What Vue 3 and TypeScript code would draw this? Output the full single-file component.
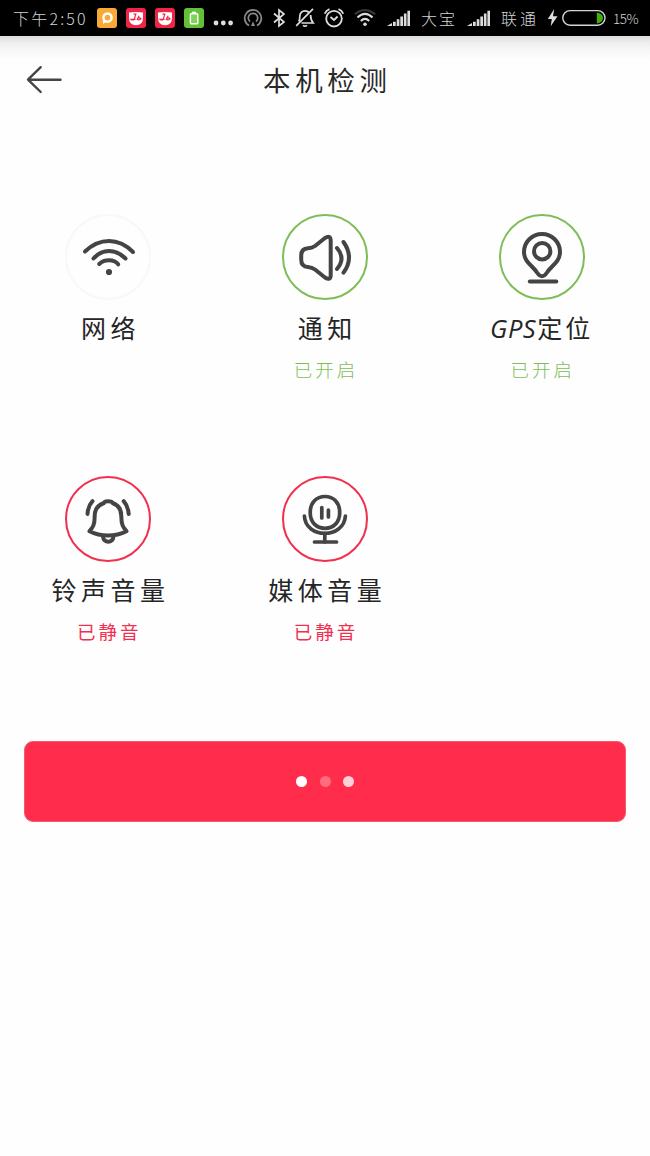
<script setup lang="ts">
type IconName = 'wifi' | 'speaker' | 'pin' | 'bell' | 'mic'

interface CheckItem {
  icon: IconName
  label: string
  status: string
  state: 'pending' | 'ok' | 'error'
  mixed?: boolean
}

const items: CheckItem[] = [
  { icon: 'wifi', label: '网络', status: '', state: 'pending' },
  { icon: 'speaker', label: '通知', status: '已开启', state: 'ok' },
  { icon: 'pin', label: '定位', status: '已开启', state: 'ok', mixed: true },
  { icon: 'bell', label: '铃声音量', status: '已静音', state: 'error' },
  { icon: 'mic', label: '媒体音量', status: '已静音', state: 'error' },
]

const icons: Record<IconName, string[]> = {
  wifi: [
    'M20 37.5Q31 27 44 27T68 38',
    'M28.5 44.5Q35 37 44 37T60.5 44.5',
    'M34.2 50Q38 46.2 44 46.2T53.2 50.3',
  ],
  speaker: [
    'M19.2 44V42Q19 34.5 26 34.2Q30 34.2 33 32L43 24Q48.7 20.5 48.7 27V61Q48.7 67 43 63.5L33 55.5Q30 53.3 26 53Q19 52.7 19.2 45Z',
    'M55 34Q64 44.5 55 55',
    'M61.5 28Q72.5 43.5 61.5 58.7',
  ],
  pin: [
    'M43 62.2Q40.5 62.2 38 58.5C34 52 25 48 25 38A18 18 0 0 1 61 38C61 48 52 52 48 58.5Q45.5 62.2 43 62.2Z',
    'M35 37.2a8.2 8.2 0 1 0 16.4 0a8.2 8.2 0 1 0-16.4 0Z',
    'M30.8 67.5H57.3',
  ],
  bell: [
    'M39 27Q39 25.2 43 25.2T47.5 27C53.5 29 56.3 33 56.3 40C56.3 49 58 51 61.5 55.2Q53 59.5 43 59.5T24.5 55.2C28 51 29.7 49 29.7 40C29.7 33 33 29 39 27Z',
    'M38 60.5C38.5 67.5 48 67.5 48.5 60.5',
    'M27.5 25.2Q23 30 22.5 38',
    'M58.7 25.2Q63 30 63.7 38',
  ],
  mic: [
    'M43 20.5C51.5 20.5 57.7 26.5 57.7 36.5S51.5 52.3 43 52.3S28.2 46.5 28.2 36.5S34.5 20.5 43 20.5Z',
    'M22.4 40C23.5 63 62 63 63.4 40',
    'M39.8 31.5V42',
    'M46.4 34V41',
    'M42.8 57.5V66',
    'M32.5 66H54.5',
  ],
}
</script>

<template>
  <main class="screen">
    <header class="status">
      <span class="time">下午2:50</span>
      <span class="app orange">
        <svg width="20" height="20"><path d="M6 16V10A4.5 4 0 1 1 10.5 14Q8.5 13.8 7.5 15Z" fill="#fff" /><circle cx="10.5" cy="9.6" r="4.1" fill="#f8a936" stroke="#fff" stroke-width="2.4" /></svg>
      </span>
      <span v-for="n in 2" :key="n" class="app red">
        <svg width="20" height="20"><path d="M3 4.5Q10 3.4 17 4.5V10Q17 17.3 10 17.3T3 10Z" fill="#fff" /><path d="M7.5 6.2H9.8L8.3 11.2Q6.8 12.6 5.2 11.4H9.5M13.2 7.8L11.2 11.2Q13.5 12.6 15 10.6Q14 9.2 12.2 10.2" fill="none" stroke="#ef2547" stroke-width="1.2" /></svg>
      </span>
      <span class="app green">
        <svg width="20" height="20"><rect x="6.4" y="5.7" width="7.4" height="10" rx=".8" fill="#7fd457" stroke="#fff" stroke-width="1.4" /><path d="M8 4.4H12" stroke="#fff" stroke-width="1.5" /></svg>
      </span>
      <svg class="more" width="20" height="20"><g fill="#dedede"><circle cx="3" cy="15" r="2.4" /><circle cx="10.3" cy="15" r="2.4" /><circle cx="17.6" cy="15" r="2.4" /></g></svg>
      <svg class="cast" width="20" height="20" fill="none" stroke="#8b8b8b" stroke-width="1.7"><path d="M6 17.5A8.3 8.3 0 1 1 14 17.5" /><path d="M7 13.6A4.7 4.7 0 1 1 13 13.6" /><path d="M10 13.5L12 18H8Z" fill="#8b8b8b" stroke="none" /></svg>
      <svg class="bt" width="12" height="20" fill="none" stroke="#ddd" stroke-width="1.7"><path d="M1 5.5L11 14L6 18V2L11 6L1 14.5" /></svg>
      <svg class="mute" width="20" height="20" fill="none" stroke="#ddd" stroke-width="1.7"><path d="M3.8 13.5Q4.8 12 4.8 8.5C4.8 5.2 7 2.8 10 2.8Q12.5 2.8 14.2 4.6M15.6 7Q15.6 12 18.2 15H6.5M8 17.3Q10 19 12 17.3M1.2 17.8L18 .8" /></svg>
      <svg class="alarm" width="20" height="20" fill="none" stroke="#ddd" stroke-width="1.8"><circle cx="10" cy="10.7" r="7.8" /><path d="M6.5 9L10 12L13.6 8.5M.8 5.8Q2 2.4 5.5 1.2M19.2 5.8Q18 2.4 14.5 1.2" /></svg>
      <svg class="net" width="22" height="20" fill="none" stroke="#ddd" stroke-width="2.1"><path d="M.8 6.2Q11-2 21.2 6.2" stroke="#363636" /><path d="M3.5 9.4Q11 2.4 18.5 9.4M6.8 12.9Q11 8.8 15.2 12.9" /><circle cx="11" cy="16.3" r="1.8" fill="#ddd" stroke="none" /></svg>
      <svg class="signal" width="24" height="20" fill="#ddd"><path d="M0 18L5 15V18ZM6 13.8H8.7V18H6ZM9.7 11.2H12.4V18H9.7ZM13.3 8.4H16V18H13.3ZM16.9 5.6H19.5V18H16.9ZM20.4 2.8H23V18H20.4Z" /></svg>
      <span class="carrier one">大宝</span>
      <svg class="signal" width="24" height="20" fill="#ddd"><path d="M0 18L5 15V18ZM6 13.8H8.7V18H6ZM9.7 11.2H12.4V18H9.7ZM13.3 8.4H16V18H13.3ZM16.9 5.6H19.5V18H16.9ZM20.4 2.8H23V18H20.4Z" /></svg>
      <span class="carrier two">联通</span>
      <svg class="bolt" width="11" height="20" fill="#ddd"><path d="M7.2 1L.8 11H4.8L3.7 18.3L10.5 8.2H6Z" /></svg>
      <svg class="battery" width="44" height="20"><rect x=".8" y="2.6" width="42.2" height="14.6" rx="7.2" fill="none" stroke="#d5d5d5" stroke-width="1.4" /><path d="M34.8 4.7C43 4.7 43 15.2 34.8 15.2Z" fill="#43ad0d" /></svg>
      <span class="percent">15%</span>
    </header>

    <nav class="titlebar">
      <svg class="back" width="38" height="30" fill="none" stroke="#444" stroke-width="2.4" stroke-linecap="round" stroke-linejoin="round"><path d="M15.7 3.2L3 15.7L15.7 28M3.5 15.7H35.5" /></svg>
      <h1>本机检测</h1>
    </nav>

    <section class="checks">
      <div v-for="item in items" :key="item.label" class="check" :class="item.state">
        <div class="ring">
          <svg width="86" height="86" viewBox="0 0 86 86" fill="none" stroke="#444" stroke-width="4" stroke-linecap="round" stroke-linejoin="round">
            <path v-for="d in icons[item.icon]" :key="d" :d="d" :stroke-width="item.icon === 'mic' ? 3.7 : 4" />
            <circle v-if="item.icon === 'wifi'" cx="44" cy="58" r="3.1" fill="#444" stroke="none" />
          </svg>
        </div>
        <div class="label" :class="{ mixed: item.mixed }"><i v-if="item.mixed">GPS</i>{{ item.label }}</div>
        <div class="result">{{ item.status }}</div>
      </div>
    </section>

    <button class="action" type="button" aria-label="检测中">
      <b></b><b></b><b></b>
    </button>
  </main>
</template>

<style>
body {
  margin: 0;
  background: #fefefe;
}
</style>

<style scoped>
.screen {
  width: 650px;
  height: 1156px;
  overflow: hidden;
  background: #fefefe;
  color: #252525;
  font-family: "Noto Sans CJK SC", sans-serif;
  font-weight: 400;
}
.status {
  display: flex;
  align-items: center;
  box-sizing: border-box;
  height: 36px;
  padding-left: 13px;
  background: #000;
  color: #d4d4d4;
  font-size: 16px;
  font-weight: 300;
  line-height: 32px;
  white-space: nowrap;
}
.status > * {
  flex-shrink: 0;
}
.status svg {
  display: block;
}
.time {
  width: 75px;
  letter-spacing: 2.2px;
}
.app {
  width: 20px;
  height: 20px;
  margin-left: 9px;
  border-radius: 3px;
}
.orange {
  background: #f8a936;
}
.red {
  background: #ef2547;
}
.green {
  background: #63c135;
}
.more {
  margin-left: 9px;
}
.cast {
  margin-left: 10px;
}
.bt {
  margin-left: 10px;
}
.mute {
  margin-left: 10px;
}
.alarm {
  margin-left: 9px;
}
.net {
  margin-left: 10px;
}
.signal {
  margin-left: 11px;
}
.carrier {
  margin-left: 10px;
  letter-spacing: 2px;
}
.one {
  width: 35px;
}
.two {
  width: 37px;
  letter-spacing: 3px;
}
.bolt {
  margin-left: 9px;
}
.battery {
  margin-left: 4px;
}
.percent {
  margin-left: 7px;
  font-size: 13.5px;
  letter-spacing: -0.5px;
}
.titlebar {
  display: grid;
  grid-template-columns: 100px 1fr 100px;
  align-items: center;
  height: 86px;
  background: linear-gradient(#dcdcdc, #ededed 6px, #f7f7f7 14px, #fefefe 24px);
}
.back {
  margin-left: 25px;
}
h1 {
  margin: 0;
  color: #292929;
  font-size: 27.5px;
  font-weight: 400;
  line-height: 40px;
  letter-spacing: 4.7px;
  text-align: center;
  text-indent: 4.7px;
}
.checks {
  display: grid;
  grid-template-columns: repeat(3, 1fr);
  grid-auto-rows: 262px;
  margin-top: 92px;
}
.check {
  display: flex;
  flex-direction: column;
  align-items: center;
}
.ring {
  box-sizing: border-box;
  width: 86px;
  height: 86px;
  border: 2px solid #f8f8f8;
  border-radius: 50%;
}
.ring svg {
  display: block;
  margin: -2px;
}
.ok .ring {
  border-color: #7fbd58;
}
.error .ring {
  border-color: #f32f50;
}
.label {
  height: 40px;
  margin-top: 7px;
  font-size: 25px;
  line-height: 40px;
  letter-spacing: 4.5px;
  text-indent: 4.5px;
  white-space: nowrap;
}
.label i {
  margin-right: 1px;
  font-family: "Open Sans", sans-serif;
  font-size: 25.5px;
  font-weight: 400;
  letter-spacing: 0.5px;
}
.mixed {
  letter-spacing: 3px;
  text-indent: 0;
}
.result {
  height: 30px;
  margin-top: 7px;
  font-size: 18.5px;
  font-weight: 300;
  line-height: 30px;
  letter-spacing: 3px;
  text-indent: 2px;
}
.ok .result {
  color: #7fbd58;
}
.error .result {
  color: #f32f50;
  font-weight: 400;
}
.action {
  display: flex;
  align-items: center;
  justify-content: center;
  gap: 12.5px;
  width: 602px;
  height: 81px;
  margin: 3px 24px 0;
  padding: 0;
  border: 1px solid #f25b70;
  border-radius: 9px;
  background: #ff2d4b;
}
.action b {
  width: 11px;
  height: 11px;
  border-radius: 50%;
  background: #fff;
}
.action b:nth-child(2) {
  background: #ff6c80;
}
.action b:nth-child(3) {
  background: #ffd0d8;
}
</style>
